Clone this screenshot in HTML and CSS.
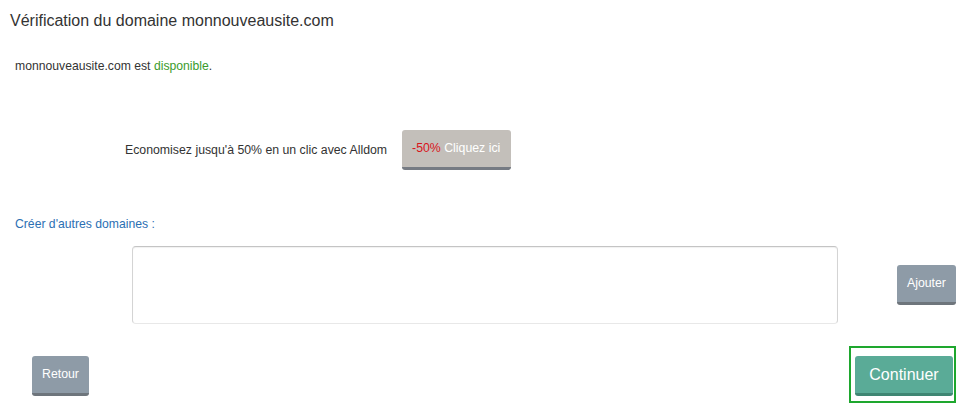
FILE: index.html
```html
<!DOCTYPE html>
<html lang="fr">
<head>
<meta charset="utf-8">
<title>Vérification du domaine</title>
<link rel="stylesheet" href="styles.css">
</head>
<body>
<div class="page">
  <h1 class="title">Vérification du domaine monnouveausite.com</h1>
  <p class="status">monnouveausite.com est <span class="ok">disponible</span>.</p>
  <div class="promo">
    <span class="promo-text">Economisez jusqu'à 50% en un clic avec Alldom</span>
    <button class="btn btn-promo" type="button"><span class="red">-50%</span> Cliquez ici</button>
  </div>
  <p class="label">Créer d'autres domaines :</p>
  <div class="add-row">
    <textarea class="domains"></textarea>
    <button class="btn btn-gray" type="button">Ajouter</button>
  </div>
  <div class="footer">
    <button class="btn btn-gray btn-back" type="button">Retour</button>
    <div class="focus-box">
      <button class="btn btn-green" type="button">Continuer</button>
    </div>
  </div>
</div>
</body>
</html>
```

FILE: styles.css
```css
html, body {
  margin: 0;
  padding: 0;
  background: #fff;
}
body {
  font-family: "Liberation Sans", Arial, sans-serif;
  color: #333;
}
.page {
  width: 968px;
  display: flex;
  flex-direction: column;
}
.title {
  margin: 0;
  padding: 12px 10px 0;
  font-size: 16px;
  line-height: 18px;
  font-weight: normal;
  color: #333;
}
.status {
  margin: 29px 0 0;
  padding-left: 15px;
  font-size: 12.2px;
  line-height: 14px;
}
.ok {
  color: #3b9b2c;
}
.promo {
  margin-top: 57px;
  padding-left: 125px;
  display: flex;
  align-items: center;
  gap: 15px;
  font-size: 12.3px;
  line-height: 14px;
}
.promo-text {
  color: #333;
}
.btn {
  font-family: "Liberation Sans", Arial, sans-serif;
  font-size: 12.3px;
  line-height: 17px;
  padding: 10px 10px;
  border: 0;
  border-bottom: 3px solid #6e757c;
  border-radius: 3px;
  color: #fff;
  background: #8e9ba7;
  cursor: pointer;
  margin: 0;
}
.btn-promo {
  background: #c3bfba;
  border-bottom-color: #767b83;
  padding-right: 11px;
}
.red {
  color: #d9141b;
}
.label {
  margin: 47px 0 0;
  padding-left: 15px;
  font-size: 12.2px;
  line-height: 14px;
  color: #2c6fb3;
}
.add-row {
  margin-top: 15px;
  padding-left: 132px;
  display: flex;
  align-items: center;
  gap: 59px;
}
.domains {
  box-sizing: border-box;
  width: 706px;
  height: 78px;
  margin: 0;
  border: 1px solid #d4d4d4;
  border-top-color: #c4c4c4;
  border-bottom-color: #e8e8e8;
  border-radius: 4px;
  box-shadow: inset 0 1px 1px rgba(0, 0, 0, 0.06);
  resize: none;
  background: #fff;
}
.footer {
  margin-top: 22px;
  padding: 0 12px 0 32px;
  display: flex;
  justify-content: space-between;
  align-items: flex-start;
}
.btn-back {
  margin-top: 10px;
}
.focus-box {
  border: 2px solid #1ea72e;
  padding: 8px 1px 5px 4px;
  display: flex;
}
.btn-green {
  background: #5aab97;
  border-bottom-color: #3f8673;
  font-size: 16px;
  width: 98px;
  padding: 10px 0;
  text-align: center;
}
```
